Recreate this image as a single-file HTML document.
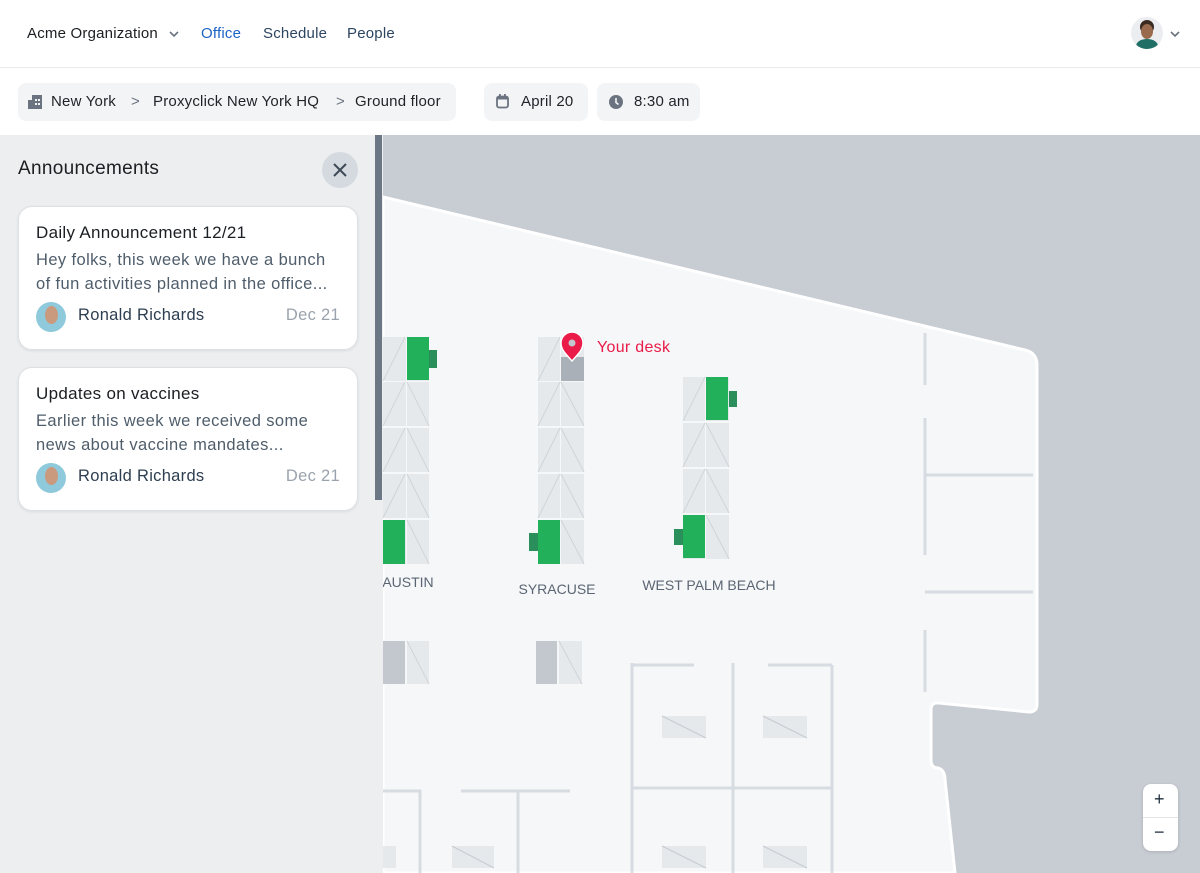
<!DOCTYPE html>
<html><head><meta charset="utf-8"><style>
*{box-sizing:border-box;margin:0;padding:0}
body{width:1200px;height:873px;overflow:hidden;font-family:"Liberation Sans",sans-serif;background:#c8cdd3;position:relative}
.hdr{position:absolute;left:0;top:0;width:1200px;height:68px;background:#fff;border-bottom:1px solid #e8eaed}
.hdr span{position:absolute;top:25px;font-size:15px;letter-spacing:0.2px}
.sub{position:absolute;left:0;top:68px;width:1200px;height:67px;background:#fff}
.pill{position:absolute;top:83px;height:38px;background:#f3f4f6;border-radius:8px;font-size:15px;color:#1f2328;line-height:38px;letter-spacing:0.2px}
.panel{position:absolute;left:0;top:135px;width:383px;height:738px;background:#eceef0}
.card{position:absolute;left:18px;width:340px;height:144px;background:#fff;border-radius:14px;border:1px solid #dde1e5;box-shadow:0 1px 3px rgba(0,0,0,.08)}
.card .t{position:absolute;left:17px;top:16px;font-size:17px;color:#1b1e22;letter-spacing:0.3px}
.card .b{position:absolute;left:17px;top:41px;font-size:16.5px;color:#4f5d6b;line-height:24px;width:298px;letter-spacing:0.4px}
.card .av{position:absolute;left:17px;top:95px;width:30px;height:30px;border-radius:50%;background:#8fc9dc;overflow:hidden}
.card .n{position:absolute;left:59px;top:99px;font-size:16.5px;color:#2d3e50;letter-spacing:0.3px}
.card .d{position:absolute;right:17px;top:99px;font-size:16.5px;color:#9aa3ad;letter-spacing:0.3px}
</style></head><body>
<div class="hdr">
<span style="left:27px;color:#1b1e22">Acme Organization</span>
<svg style="position:absolute;left:169px;top:30px" width="10" height="8"><path d="M1 2l4 4 4-4" stroke="#6b7380" stroke-width="1.6" fill="none"/></svg>
<span style="left:201px;color:#1d63c4">Office</span>
<span style="left:263px;color:#2c4560">Schedule</span>
<span style="left:347px;color:#2c4560">People</span>
<div style="position:absolute;left:1131px;top:17px;width:32px;height:32px;border-radius:50%;background:#ecedf0;overflow:hidden">
<div style="position:absolute;left:9px;top:3px;width:14px;height:14px;border-radius:50%;background:#3a2a22"></div>
<div style="position:absolute;left:10px;top:7px;width:12px;height:15px;border-radius:50%;background:#9a6a4e"></div>
<div style="position:absolute;left:5px;top:22px;width:22px;height:14px;border-radius:50% 50% 0 0;background:#1f6f66"></div></div>
<svg style="position:absolute;left:1170px;top:30px" width="10" height="8"><path d="M1 2l4 4 4-4" stroke="#6b7380" stroke-width="1.6" fill="none"/></svg>
</div>
<div class="sub">
</div>
<div class="pill" style="left:18px;width:438px">
<svg style="position:absolute;left:10px;top:12px" width="14" height="14"><rect x="4" y="0" width="10" height="14" fill="#6b7380"/><rect x="0" y="5" width="5" height="9" fill="#6b7380"/><rect x="7" y="4" width="2" height="2" fill="#f3f4f6"/><rect x="10" y="4" width="2" height="2" fill="#f3f4f6"/><rect x="7" y="8" width="2" height="2" fill="#f3f4f6"/><rect x="10" y="8" width="2" height="2" fill="#f3f4f6"/></svg>
<span style="position:absolute;left:33px">New York</span>
<span style="position:absolute;left:113px;color:#6b7380">&gt;</span>
<span style="position:absolute;left:135px">Proxyclick New York HQ</span>
<span style="position:absolute;left:318px;color:#6b7380">&gt;</span>
<span style="position:absolute;left:337px">Ground floor</span>
</div>
<div class="pill" style="left:484px;width:104px">
<svg style="position:absolute;left:12px;top:11px" width="13" height="15"><rect x="1" y="2.5" width="11" height="11" rx="2" fill="none" stroke="#6b7380" stroke-width="1.8"/><rect x="1" y="2.5" width="11" height="3" fill="#6b7380"/><rect x="3" y="0" width="1.8" height="3" fill="#6b7380"/><rect x="8" y="0" width="1.8" height="3" fill="#6b7380"/></svg>
<span style="position:absolute;left:37px">April 20</span></div>
<div class="pill" style="left:597px;width:103px">
<svg style="position:absolute;left:12px;top:12px" width="14" height="14"><circle cx="7" cy="7" r="7" fill="#6b7380"/><path d="M7 3v4.5l2.5 2" stroke="#f3f4f6" stroke-width="1.6" fill="none"/></svg>
<span style="position:absolute;left:37px">8:30 am</span></div>

<svg style="position:absolute;left:0;top:135px" width="1200" height="738" viewBox="0 135 1200 738">
<path d="M383 197 L1025 350 Q1037 353 1037 365 L1037 704 Q1037 712 1029 712 L939 703 Q931 702 931 710 L931 760 Q931 768 938 768 Q945 770 945 780 L955 873 L383 873 Z" fill="#f5f7f8" stroke="#fff" stroke-width="3"/>
<g stroke="#d6dce2" stroke-width="3" fill="none">
<path d="M925 333V385M925 418V555M925 630V692M925 475H1033M925 592H1033"/>
<path d="M632 663V873M632 665H694M733 663V873M768 665H832M832 665V873M632 788H832"/>
<path d="M383 791H420V873M461 791H570M518 791V873"/>
</g>
<g fill="#e6e9eb">
<rect x="662" y="716" width="44" height="22"/><rect x="763" y="716" width="44" height="22"/>
<rect x="662" y="846" width="44" height="22"/><rect x="763" y="846" width="44" height="22"/>
<rect x="452" y="846" width="42" height="22"/><rect x="383" y="846" width="13" height="22"/>
</g>
<g stroke="#c6ccd2" stroke-width="1">
<path d="M662 716L706 738M763 716L807 738M662 846L706 868M763 846L807 868M452 846L494 868"/>
</g>
<g fill="#e6e9eb">
<rect x="383" y="337" width="23" height="44"/><rect x="407" y="337" width="22" height="44"/>
<rect x="383" y="382" width="23" height="44"/><rect x="407" y="382" width="22" height="44"/>
<rect x="383" y="428" width="23" height="44"/><rect x="407" y="428" width="22" height="44"/>
<rect x="383" y="474" width="23" height="44"/><rect x="407" y="474" width="22" height="44"/>
<rect x="383" y="520" width="23" height="44"/><rect x="407" y="520" width="22" height="44"/>
<rect x="538" y="337" width="22" height="44"/><rect x="561" y="337" width="23" height="44"/>
<rect x="538" y="382" width="22" height="44"/><rect x="561" y="382" width="23" height="44"/>
<rect x="538" y="428" width="22" height="44"/><rect x="561" y="428" width="23" height="44"/>
<rect x="538" y="474" width="22" height="44"/><rect x="561" y="474" width="23" height="44"/>
<rect x="538" y="520" width="22" height="44"/><rect x="561" y="520" width="23" height="44"/>
<rect x="683" y="377" width="22" height="44"/><rect x="706" y="377" width="23" height="44"/>
<rect x="683" y="423" width="22" height="44"/><rect x="706" y="423" width="23" height="44"/>
<rect x="683" y="469" width="22" height="44"/><rect x="706" y="469" width="23" height="44"/>
<rect x="683" y="515" width="22" height="44"/><rect x="706" y="515" width="23" height="44"/>
<rect x="407" y="641" width="22" height="43"/><rect x="559" y="641" width="23" height="43"/>
</g>
<g stroke="#cfd4d9" stroke-width="1">
<path d="M383 381L405 337M383 426L405 382M429 426L407 382M383 472L405 428M429 472L407 428M383 518L405 474M429 518L407 474M429 564L407 520"/>
<path d="M538 381L560 337M538 426L560 382M584 426L561 382M538 472L560 428M584 472L561 428M538 518L560 474M584 518L561 474M584 564L561 520"/>
<path d="M683 421L705 377M683 467L705 423M729 467L706 423M683 513L705 469M729 513L706 469M729 559L706 515"/>
<path d="M407 641L429 684M559 641L582 684"/>
</g>
<g fill="#22b05b">
<rect x="407" y="337" width="22" height="43"/><rect x="383" y="520" width="22" height="44"/>
<rect x="538" y="520" width="22" height="44"/>
<rect x="706" y="377" width="22" height="43"/><rect x="683" y="515" width="22" height="43"/>
</g>
<g fill="#2a8f5b">
<rect x="429" y="350" width="8" height="18"/><rect x="529" y="533" width="9" height="18"/>
<rect x="729" y="391" width="8" height="16"/><rect x="674" y="529" width="9" height="16"/>
</g>
<rect x="561" y="357" width="23" height="24" fill="#a9b0b8"/>
<rect x="383" y="641" width="22" height="43" fill="#c3c8ce"/><rect x="536" y="641" width="21" height="43" fill="#c3c8ce"/>
<path d="M572 361 C566 354 561 350 561 343 A11 11 0 0 1 583 343 C583 350 578 354 572 361Z" fill="#ea1b48" stroke="#fff" stroke-width="1.5"/>
<circle cx="572" cy="343" r="3.5" fill="#c3c8ce"/>
<text x="597" y="352" font-family="Liberation Sans" font-size="16" fill="#ea1b48" letter-spacing="0.3">Your desk</text>
<g font-family="Liberation Sans" font-size="14" fill="#5b6573" text-anchor="middle">
<text x="408" y="587">AUSTIN</text><text x="557" y="594">SYRACUSE</text><text x="709" y="590">WEST PALM BEACH</text>
</g>
</svg>

<div style="position:absolute;left:1143px;top:784px;width:35px;height:67px;background:#fff;border-radius:8px;box-shadow:0 1px 3px rgba(0,0,0,.15)">
<div style="position:absolute;left:0;top:33px;width:35px;height:1px;background:#e3e6e9"></div>
<span style="position:absolute;left:11px;top:5px;font-size:18px;color:#1f2d3d">+</span>
<span style="position:absolute;left:11px;top:38px;font-size:18px;color:#1f2d3d">−</span></div>

<div class="panel">
<div style="position:absolute;left:18px;top:23px;font-size:19px;color:#1b1e22;letter-spacing:0.3px">Announcements</div>
<div style="position:absolute;left:322px;top:17px;width:36px;height:36px;border-radius:50%;background:#d5dae0">
<svg style="position:absolute;left:11px;top:11px" width="14" height="14"><path d="M1 1L13 13M13 1L1 13" stroke="#3e4a57" stroke-width="2"/></svg></div>
<div style="position:absolute;left:375px;top:0;width:7px;height:365px;background:#6b7785"></div>
<div class="card" style="top:71px"><div class="t">Daily Announcement 12/21</div><div class="b">Hey folks, this week we have a bunch of fun activities planned in the office...</div><div class="av"><div style="position:absolute;left:9px;top:4px;width:13px;height:18px;border-radius:50%;background:#c99a7e"></div></div><div class="n">Ronald Richards</div><div class="d">Dec 21</div></div>
<div class="card" style="top:232px"><div class="t">Updates on vaccines</div><div class="b">Earlier this week we received some news about vaccine mandates...</div><div class="av"><div style="position:absolute;left:9px;top:4px;width:13px;height:18px;border-radius:50%;background:#c99a7e"></div></div><div class="n">Ronald Richards</div><div class="d">Dec 21</div></div>
</div>
</body></html>
